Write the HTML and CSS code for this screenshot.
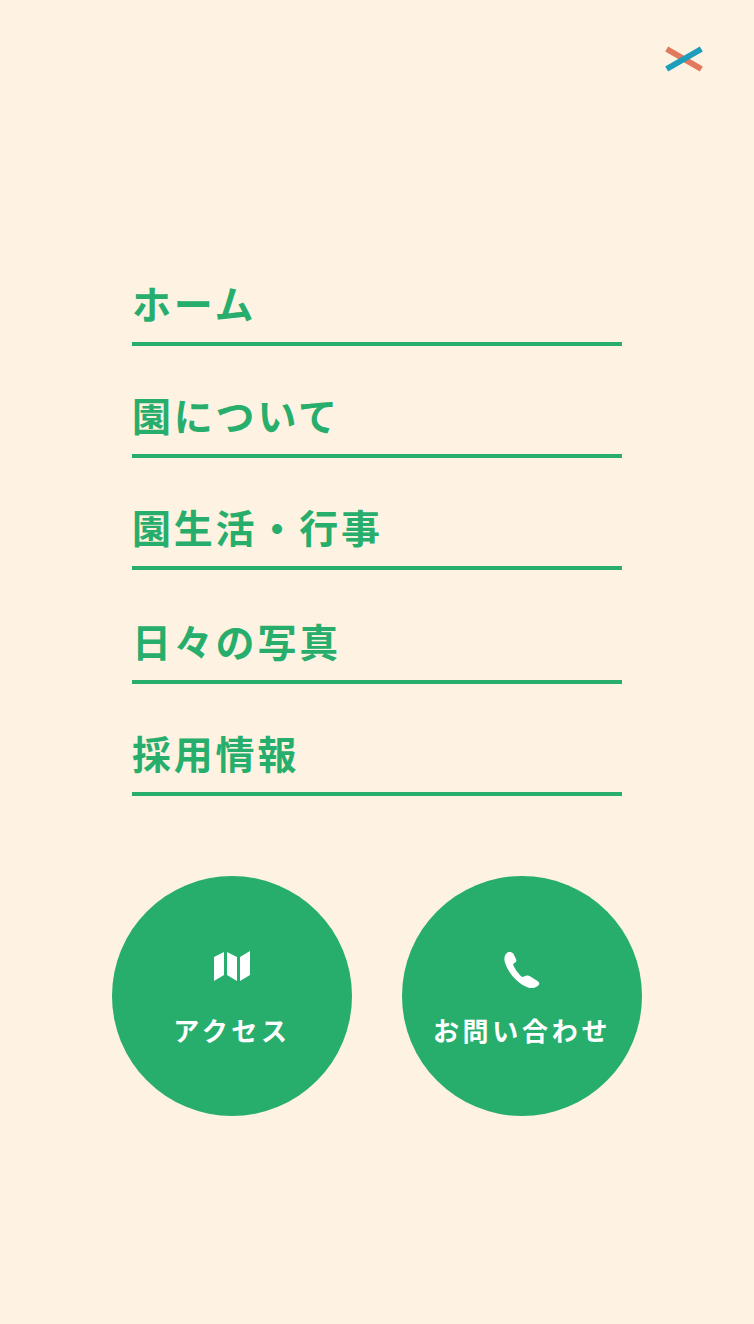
FILE: index.html
```html
<!DOCTYPE html>
<html lang="ja">
<head>
<meta charset="utf-8">
<title>メニュー</title>
<link rel="stylesheet" href="styles.css">
</head>
<body>
<div class="menu">
  <button class="close" aria-label="閉じる"><span class="bar bar-red"></span><span class="bar bar-blue"></span></button>
  <nav class="nav">
    <a class="nav-item" href="#">ホーム</a>
    <a class="nav-item" href="#">園について</a>
    <a class="nav-item" href="#">園生活・行事</a>
    <a class="nav-item tall" href="#">日々の写真</a>
    <a class="nav-item" href="#">採用情報</a>
  </nav>
  <div class="circles">
    <a class="circle" href="#">
      <svg class="icon" viewBox="0 0 38 38" width="38" height="38"><path d="M1 7 11 2V25L1 31ZM14 2 24 7V31L14 25ZM27 7 37 1V25L27 31Z" fill="#fff"/></svg>
      <span class="label">アクセス</span>
    </a>
    <a class="circle" href="#">
      <svg class="icon" viewBox="0 -1 38 38" width="38" height="38"><path d="M4.500 1.500C6.500 .5 9 1 10.500 3L13 8C13.800 9.800 13.200 11 11.500 12L10 13C11 17 15.500 23 19 26L22.500 25C24 24.200 25.800 24.500 27 25.300L34.500 30C36.500 31.500 36.800 33 35.500 34.300 33 36.800 29 38 25 36.500 15 33 5 22 1.800 11 .8 7 1.500 3.500 4.500 1.500Z" fill="#fff"/></svg>
      <span class="label">お問い合わせ</span>
    </a>
  </div>
</div>
</body>
</html>
```
FILE: styles.css
```css
* { box-sizing: border-box; }
html, body { margin: 0; padding: 0; }
body {
  background: #fef3e2;
  font-family: "Noto Sans CJK JP", "Noto Sans", sans-serif;
}
.menu {
  position: relative;
  height: 1324px;
  padding-top: 234px;
}
.close {
  position: absolute;
  top: 43px;
  left: 664px;
  width: 40px;
  height: 32px;
  padding: 0;
  border: 0;
  background: none;
}
.bar {
  position: absolute;
  left: 0;
  top: 13px;
  width: 40px;
  height: 6px;
}
.bar-red { background: #e2785c; transform: rotate(30deg); }
.bar-blue { background: #1f9dbd; transform: rotate(-30deg); }
.nav {
  width: 490px;
  margin: 0 auto;
  display: flex;
  flex-direction: column;
}
.nav-item {
  display: flex;
  align-items: flex-end;
  height: 112px;
  padding: 0 0 12px 0;
  border-bottom: 4px solid #28ae6c;
  color: #28ae6c;
  font-size: 39px;
  line-height: 56px;
  font-weight: 700;
  letter-spacing: 2.8px;
  text-decoration: none;
}
.nav-item.tall { height: 114px; }
.circles {
  display: flex;
  justify-content: center;
  gap: 50px;
  margin-top: 80px;
}
.circle {
  width: 240px;
  height: 240px;
  border-radius: 50%;
  background: #28ae6c;
  color: #fff;
  display: flex;
  flex-direction: column;
  align-items: center;
  padding-top: 74px;
  text-decoration: none;
}
.icon { display: block; height: 38px; }
.label {
  margin-top: 22px;
  font-size: 26px;
  line-height: 40px;
  font-weight: 700;
  letter-spacing: 3.7px;
}
```
